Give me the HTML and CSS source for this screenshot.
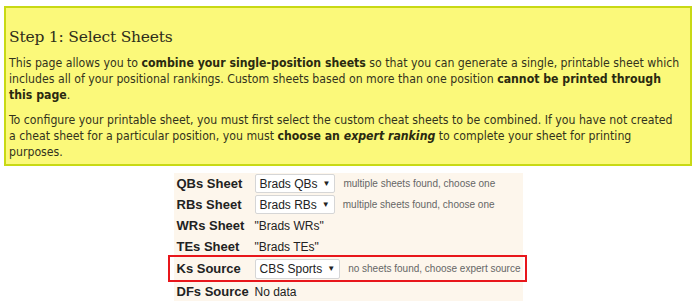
FILE: index.html
```html
<!DOCTYPE html>
<html lang="en">
<head>
  <meta charset="UTF-8">
  <title>Combine Sheets</title>
  <link rel="stylesheet" href="styles.css">
</head>
<body>
<section class="step">
  <h2>Step 1: Select Sheets</h2>
  <p>This page allows you to <b>combine your single-position sheets</b> so that you can generate a single, printable sheet which includes all of your positional rankings. Custom sheets based on more than one position <b>cannot be printed through this page</b>.</p>
  <p class="config">To configure your printable sheet, you must first select the custom cheat sheets to be combined. If you have not created a cheat sheet for a particular position, you must <b>choose an <i>expert ranking</i></b> to complete your sheet for printing purposes.</p>
</section>

<div class="sheets">
  <div class="row">
    <span class="label">QBs Sheet</span>
    <span class="select">Brads QBs <i class="arrow">&#9660;</i></span>
    <span class="hint">multiple sheets found, choose one</span>
  </div>
  <div class="row">
    <span class="label">RBs Sheet</span>
    <span class="select">Brads RBs <i class="arrow">&#9660;</i></span>
    <span class="hint">multiple sheets found, choose one</span>
  </div>
  <div class="row">
    <span class="label">WRs Sheet</span>
    <span class="value">"Brads WRs"</span>
  </div>
  <div class="row">
    <span class="label">TEs Sheet</span>
    <span class="value">"Brads TEs"</span>
  </div>
  <div class="row missing">
    <span class="label">Ks Source</span>
    <span class="select">CBS Sports <i class="arrow">&#9660;</i></span>
    <span class="hint">no sheets found, choose expert source</span>
  </div>
  <div class="row last">
    <span class="label">DFs Source</span>
    <span class="value">No data</span>
  </div>
</div>
</body>
</html>
```

FILE: styles.css
```css
body{margin:0;padding:6px 8px 0 4px;background:#fff;font-family:"DejaVu Sans Condensed","DejaVu Sans",Verdana,sans-serif;}
.step{background:#fbf97a;border:2px solid #c8d914;padding:20px 5px 4px 3px;color:#33331c;height:160px;box-sizing:border-box;}
.step h2{font-family:"DejaVu Serif",Georgia,serif;font-weight:normal;font-size:15.5px;margin:0 0 9px;color:#2e2e1a;letter-spacing:-.2px}
.step p{font-size:12.2px;line-height:16px;margin:0 0 9px;}
.step p.config{margin-right:6px}
.step b{color:#2a2a10}

.sheets{width:349px;margin:7px auto 0;background:#fdf6ec;font-family:"Liberation Sans",Arial,sans-serif;}
.row{display:flex;align-items:center;height:21px;padding-left:3px;white-space:nowrap}
.row > span{flex:none}
.label{width:78px;font-weight:bold;font-size:13px;color:#222}
.value{font-size:12px;color:#222}
.select{display:inline-flex;align-items:center;gap:5px;height:17px;padding:0 4px;background:#fff;border:1px solid #d6d6d6;border-radius:2px;font-size:12px;color:#222}
.arrow{font-style:normal;font-size:8px;color:#222}
.hint{margin-left:8px;font-size:10px;color:#666}
.missing{border:2px solid #e8161b;height:23px;margin:-2px -4px 0 -6px;padding-left:7px;}
.missing .select{height:18px}
.last{height:19px}
```
